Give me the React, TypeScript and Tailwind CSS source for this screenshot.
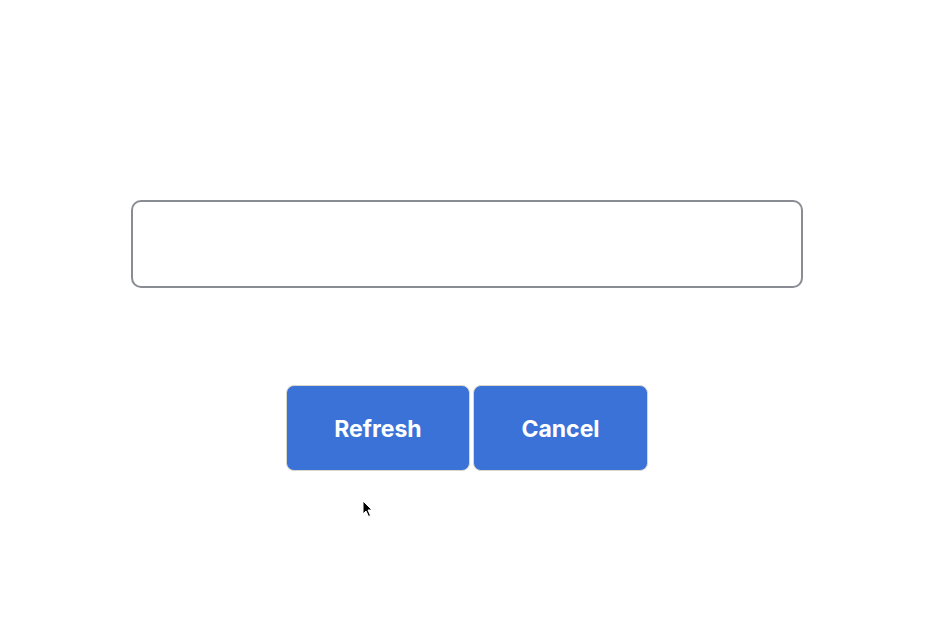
import React from "react";

export default function App() {
  return (
    <div className="relative h-[641px] w-[936px] bg-white font-['Inter',sans-serif]">
      <div className="flex flex-col items-center pr-[2px] pt-[200px]">
        <div className="h-[88px] w-[672px] rounded-[10px] border-2 border-[#8a8c94] bg-white" />
        <div className="mt-[97px] flex gap-[3px]">
          <button className="h-[86px] w-[184px] rounded-[8px] border border-[#d8d8c8] bg-[#3b72d8] pt-[2px] text-[23px] font-bold text-white">
            Refresh
          </button>
          <button className="h-[86px] w-[175px] rounded-[8px] border border-[#d8d8c8] bg-[#3b72d8] pt-[2px] text-[23px] font-bold text-white">
            Cancel
          </button>
        </div>
      </div>
      <svg
        className="absolute left-[362px] top-[500px]"
        width="12"
        height="19"
        viewBox="0 0 12 19"
      >
        <path d="M1 1 L1 14 L4 11 L6.5 16.5 L8.5 15.5 L6 10 L10 10 Z" fill="#000" stroke="#fff" strokeWidth="1" />
      </svg>
    </div>
  );
}
